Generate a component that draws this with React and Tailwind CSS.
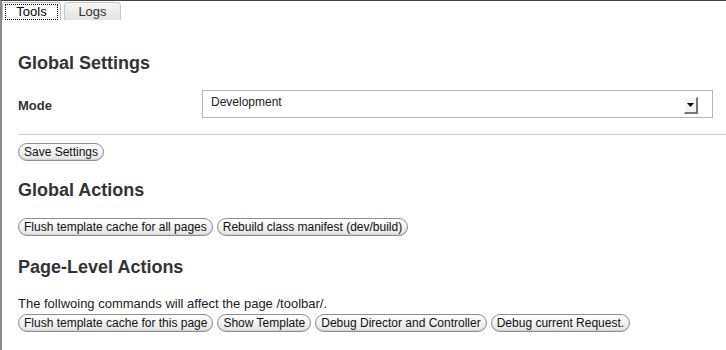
import React from 'react';

const Btn = ({ children }) => (
  <button className="h-[18px] px-[5px] rounded-full border border-[#8f8f8f] bg-gradient-to-b from-white to-[#e4e4e4] text-[12px] leading-[16px] text-[#111] shadow-[inset_0_-1px_0_#cfcfcf] whitespace-nowrap">
    {children}
  </button>
);

const Heading = ({ children, className = '' }) => (
  <h2 className={`text-[18px] leading-[22px] font-bold text-[#333] ${className}`}>{children}</h2>
);

export default function App() {
  return (
    <div className="w-[726px] h-[350px] bg-white border-t border-t-[#444] border-l-2 border-l-[#8a8a8a] overflow-hidden font-['Liberation_Sans',Arial,sans-serif]">
      {/* Tabs */}
      <div className="flex items-end gap-[3px] h-[19px]">
        <div className="w-[59px] h-[18px] bg-white border border-[#bbb] border-b-0 rounded-t-[3px] flex items-center justify-center">
          <span className="outline outline-1 outline-dotted outline-black px-[10px] text-[13px] leading-[14px] text-black">Tools</span>
        </div>
        <div className="w-[57px] h-[18px] bg-gradient-to-b from-[#f6f6f6] to-[#e2e2e2] border border-[#c8c8c8] border-b-0 rounded-t-[4px] flex items-center justify-center text-[13px] text-[#333]">
          Logs
        </div>
      </div>

      <div className="pl-[16px]">
        <Heading className="mt-[32px]">Global Settings</Heading>

        <div className="flex items-center mt-[16px]">
          <div className="w-[184px] text-[13px] font-bold text-[#333] pt-[4px]">Mode</div>
          <div className="w-[511px] h-[28px] border border-[#b5b5b5] flex items-start justify-between pl-[8px] pr-[14px] pt-[4px]">
            <span className="text-[12px] leading-[14px] text-[#222]">Development</span>
            <div className="mt-[2px] w-[14px] h-[17px] bg-[#f4f4f4] border-r-2 border-b-2 border-r-[#777] border-b-[#777] border-l border-t border-l-white border-t-white flex items-center justify-center">
              <svg width="7" height="4" viewBox="0 0 7 4"><polygon points="0,0 7,0 3.5,4" fill="#000" /></svg>
            </div>
          </div>
        </div>

        <div className="mt-[16px] h-px bg-[#d0d0d0] -mr-[20px]" />

        <div className="mt-[4px]">
          <Btn>Save Settings</Btn>
        </div>

        <Heading className="mt-[16px]">Global Actions</Heading>
        <div className="flex gap-[4px] mt-[17px]">
          <Btn>Flush template cache for all pages</Btn>
          <Btn>Rebuild class manifest (dev/build)</Btn>
        </div>

        <Heading className="mt-[20px]">Page-Level Actions</Heading>
        <p className="mt-[18px] text-[13px] leading-[15px] text-[#222]">The follwoing commands will affect the page /toolbar/.</p>
        <div className="flex gap-[4px] mt-[3px]">
          <Btn>Flush template cache for this page</Btn>
          <Btn>Show Template</Btn>
          <Btn>Debug Director and Controller</Btn>
          <Btn>Debug current Request.</Btn>
        </div>
      </div>
    </div>
  );
}
